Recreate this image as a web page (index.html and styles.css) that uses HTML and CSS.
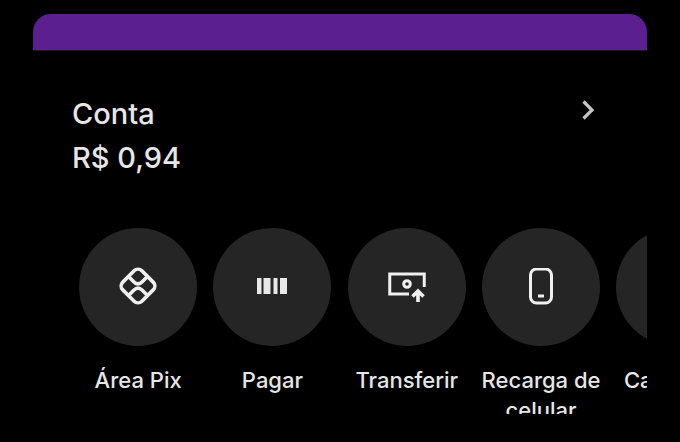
FILE: index.html
```html
<!DOCTYPE html>
<html lang="pt-BR">
<head>
    <meta charset="UTF-8">
    <title>Conta</title>
    <link rel="stylesheet" href="styles.css">
</head>
<body>
    <div class="screen">
        <!-- Purple header, only its bottom part is visible -->
        <div class="top-bar"></div>

        <!-- Account balance -->
        <div class="account">
            <div class="account-info">
                <div class="account-title">Conta</div>
                <div class="account-value">R$ 0,94</div>
            </div>
            <svg class="chevron" width="14" height="22" viewBox="0 0 14 22">
                <path d="M2.5 2.5 L11 11 L2.5 19.5" fill="none" stroke="#c4c4c4" stroke-width="3.2"/>
            </svg>
        </div>

        <!-- Shortcuts -->
        <div class="shortcuts">
            <div class="shortcut">
                <div class="circle">
                    <svg width="40" height="40" viewBox="0 1 40 40" fill="none" stroke="#f0f0f0" stroke-width="3.6">
                        <rect x="6.5" y="6.5" width="27" height="27" rx="5.5" transform="rotate(45 20 20)"/>
                        <path d="M11 11 L16 16 Q20 20 24 16 L29 11"/>
                        <path d="M11 29 L16 24 Q20 20 24 24 L29 29"/>
                    </svg>
                </div>
                <div class="shortcut-label">Área Pix</div>
            </div>
            <div class="shortcut">
                <div class="circle">
                    <svg width="32" height="18" viewBox="0 1 32 18" fill="#e8e8e8">
                        <rect x="1" y="0" width="4.5" height="17"/>
                        <rect x="7.5" y="0" width="7" height="17"/>
                        <rect x="17.5" y="0" width="4" height="17"/>
                        <rect x="24" y="0" width="7" height="17"/>
                    </svg>
                </div>
                <div class="shortcut-label">Pagar</div>
            </div>
            <div class="shortcut">
                <div class="circle">
                    <svg width="40" height="32" viewBox="0 0 40 32" fill="none" stroke="#f0f0f0" stroke-width="3">
                        <path d="M22 23 H2.75 V3 H37.25 V16"/>
                        <circle cx="20" cy="13" r="3.3"/>
                        <path d="M31 31 V20 M25.5 25.5 L31 20 L36.5 25.5" stroke-width="3.6"/>
                    </svg>
                </div>
                <div class="shortcut-label">Transferir</div>
            </div>
            <div class="shortcut">
                <div class="circle">
                    <svg width="24" height="38" viewBox="0 0.5 24 38" fill="none" stroke="#f0f0f0" stroke-width="3">
                        <rect x="1.5" y="1.5" width="21" height="34" rx="6"/>
                        <rect x="9" y="27" width="6" height="3" fill="#f0f0f0" stroke="none"/>
                    </svg>
                </div>
                <div class="shortcut-label">Recarga de celular</div>
            </div>
            <div class="shortcut">
                <div class="circle"></div>
                <div class="shortcut-label">Caixinhas</div>
            </div>
        </div>
    </div>
</body>
</html>
```

FILE: styles.css
```css
body {
    margin: 0;
    background: #000;
    font-family: 'Inter', sans-serif;
    color: #e6e6e6;
    height: 442px;
    overflow: hidden;
}

.screen {
    width: 614px;
    margin: 14px 0 0 33px;
    overflow: hidden;
}

.top-bar {
    height: 36px;
    background: #5b1f8f;
    border-radius: 18px 18px 0 0;
    border-bottom: 1px solid #1c1a1e;
}

/* Account */
.account {
    display: flex;
    justify-content: space-between;
    align-items: flex-start;
    padding: 46px 52px 0 39px;
}

.account-title {
    font-size: 29px;
    font-weight: 500;
    line-height: 34px;
}

.account-value {
    font-size: 29px;
    font-weight: 500;
    line-height: 34px;
    margin-top: 10px;
}

.chevron {
    margin-top: 2px;
}

/* Shortcuts row */
.shortcuts {
    display: flex;
    height: 186px;
    margin-top: 53px;
    padding-left: 38px;
    overflow: hidden;
}

.shortcut {
    flex: none;
    width: 134.3px;
    text-align: center;
}

.circle {
    width: 118px;
    height: 118px;
    margin: 0 auto;
    border-radius: 50%;
    background: #252525;
    display: flex;
    align-items: center;
    justify-content: center;
}

.shortcut-label {
    font-size: 22px;
    font-weight: 500;
    line-height: 30px;
    margin: 19px -4px 0;
}
```
